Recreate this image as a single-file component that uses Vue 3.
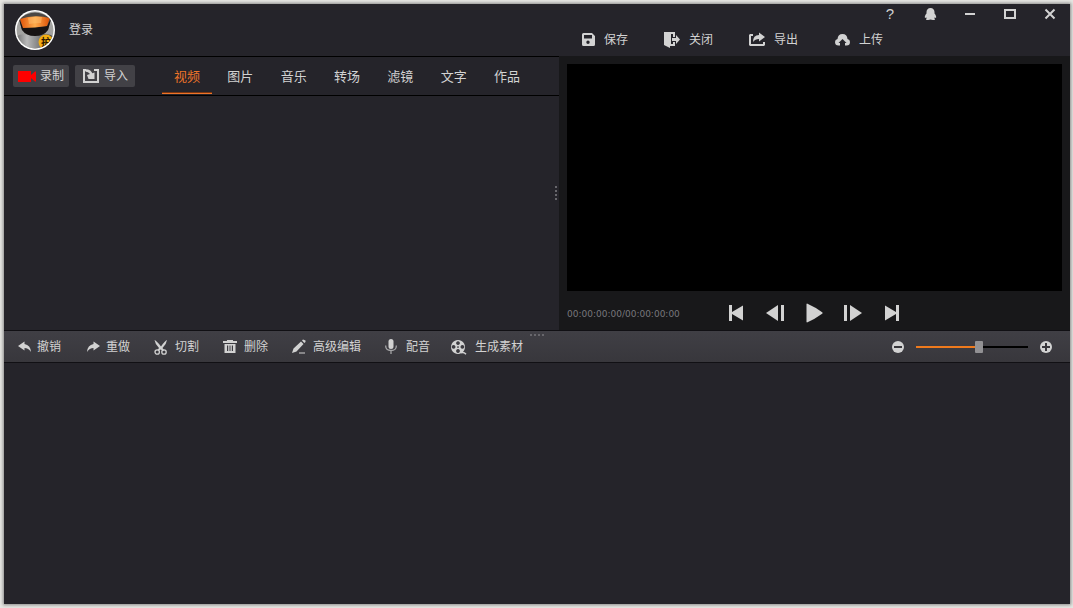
<script setup>
import { ref, computed } from 'vue'

const tabs = ['视频', '图片', '音乐', '转场', '滤镜', '文字', '作品']
const activeTab = ref('视频')
const zoom = ref(57)
const zoomStyle = computed(() => ({ '--fill': zoom.value + '%' }))
</script>

<template>
  <div class="desktop">
    <div class="window">
      <div class="workspace">
        <section class="library">
          <header class="account">
            <button class="avatar" aria-label="账户">
              <svg viewBox="0 0 40 40">
                <defs>
                  <clipPath id="face"><circle cx="20" cy="20" r="18.5" /></clipPath>
                  <linearGradient id="metal" x1="0" x2="1" y1="0" y2="0">
                    <stop offset="0" stop-color="#666" />
                    <stop offset=".3" stop-color="#b9b9b9" />
                    <stop offset=".65" stop-color="#757575" />
                    <stop offset="1" stop-color="#3c3c3c" />
                  </linearGradient>
                  <linearGradient id="visor" x1="0" x2="1" y1="0" y2="0">
                    <stop offset="0" stop-color="#e0540a" />
                    <stop offset=".5" stop-color="#ffac4c" />
                    <stop offset="1" stop-color="#d94d04" />
                  </linearGradient>
                </defs>
                <circle cx="20" cy="20" r="20" fill="#fff" />
                <g clip-path="url(#face)">
                  <rect width="40" height="40" fill="#a3a3a1" />
                  <path d="M4 9Q20 -4 36 9L33 20Q20 27 7 20Z" fill="#4a4744" />
                  <path d="M0 27Q6 23 13 25Q21 27 29 24Q37 24 40 28V40H0Z" fill="url(#metal)" />
                  <path d="M4 9L7 20Q11 26 20 26Q29 26 33 20L36 9L32 16Q20 18 8 17Z" fill="#171313" />
                  <path d="M5 9Q19 4 35 8L32 16Q20 18 8 18Z" fill="url(#visor)" />
                  <path d="M13 8Q20 6 27 7L26 13Q20 13 14 14Z" fill="#ffc06d" opacity=".5" />
                  <circle cx="31" cy="32" r="7.5" fill="#f3ae12" />
                  <text x="31" y="36" text-anchor="middle" class="badge-text">护</text>
                </g>
              </svg>
            </button>
            <a href="#" class="login">登录</a>
          </header>

          <div class="library-bar">
            <div class="sources">
              <button class="source">
                <svg class="icon" viewBox="0 0 18 18">
                  <path d="M0 4H13V8L17 4.5H18V14.5H17L13 11V15H0Z" fill="#fe0000" />
                </svg>
                录制
              </button>
              <button class="source source-wide">
                <svg class="icon" viewBox="0 0 18 18" fill="none" stroke="currentColor">
                  <path d="M4 3H2V15H16V3H12" stroke-width="2" />
                  <path d="M3.500 3.500Q8.500 3.500 9.500 8" stroke-width="2.400" />
                  <path d="M5 8L12.500 5.500V12H6.500Z" fill="currentColor" stroke="none" />
                </svg>
                导入
              </button>
            </div>
            <nav class="tabs">
              <button
                v-for="tab in tabs"
                :key="tab"
                class="tab"
                :class="{ active: tab === activeTab }"
                @click="activeTab = tab"
              >{{ tab }}</button>
            </nav>
          </div>
          <div class="media"></div>
          <div class="grip grip-vertical"><i></i><i></i><i></i><i></i></div>
        </section>

        <section class="output">
          <header class="output-head">
            <div class="window-controls">
              <button class="help" aria-label="帮助">?</button>
              <button aria-label="消息">
                <svg class="icon" viewBox="0 0 18 18" fill="currentColor">
                  <path d="M9.500 3C7 3 5.500 4.700 5.500 7V8.500C4.300 10 3.500 11.500 3.900 12.800C4.200 13.200 4.800 12.700 5.100 12.300L5.700 13.300C5 13.700 4.800 14.200 5.100 14.700C6.600 15.100 8.500 15 9.500 14.500C10.500 15 12.400 15.100 13.900 14.700C14.200 14.200 14 13.700 13.300 13.300L13.900 12.300C14.200 12.700 14.800 13.200 15.100 12.800C15.500 11.500 14.700 10 13.500 8.500V7C13.500 4.700 12 3 9.500 3Z" />
                </svg>
              </button>
              <button aria-label="最小化">
                <svg class="icon" viewBox="0 0 18 18"><path d="M4 8H14V10H4Z" fill="currentColor" /></svg>
              </button>
              <button aria-label="最大化">
                <svg class="icon" viewBox="0 0 18 18" fill="none" stroke="currentColor" stroke-width="2">
                  <rect x="4" y="5" width="10" height="8" />
                </svg>
              </button>
              <button aria-label="关闭窗口">
                <svg class="icon" viewBox="0 0 18 18" stroke="currentColor" stroke-width="2">
                  <path d="M4.500 4.500L13.500 13.500M13.500 4.500L4.500 13.500" />
                </svg>
              </button>
            </div>
            <div class="actions">
              <button>
                <svg class="icon" viewBox="0 0 18 18">
                  <path fill="currentColor" fill-rule="evenodd" d="M4.500 2H13L16 5V13.500Q16 15 14.500 15H4.500Q3 15 3 13.500V3.500Q3 2 4.500 2ZM5 4V7.500H13V4ZM9 9.500A1.700 1.700 0 1 0 9 12.900A1.700 1.700 0 1 0 9 9.500Z" />
                </svg>
                保存
              </button>
              <button>
                <svg class="icon" viewBox="0 0 18 18" fill="currentColor">
                  <path d="M0 1H11V6H9V3H7V13H9V11H11V15H6V17L0 14Z" />
                  <path d="M8 7H12V4L16 8.500L12 13V10H8Z" />
                </svg>
                关闭
              </button>
              <button>
                <svg class="icon" viewBox="0 0 18 18" fill="currentColor">
                  <path d="M1 3H4V5H2V13H14V11H16V14L15 15H1L0 14V4Z" />
                  <path d="M4 11Q4 4 10 4V1.500L16 6L10 10.500V8Q6 8 4 11Z" />
                </svg>
                导出
              </button>
              <button>
                <svg class="icon" viewBox="0 0 18 18">
                  <path fill="currentColor" d="M4.500 14.500Q1 14.500 1 11Q1 8.500 3.500 8Q4 3 8.500 3Q13 3 13.500 8Q16 8.500 16 11Q16 14.500 12.500 14.500H11V12H12.500L8.500 8L4.500 12H6V14.500Z" />
                </svg>
                上传
              </button>
            </div>
          </header>

          <div class="player">
            <div class="screen"></div>
            <div class="transport">
              <span class="timecode">00:00:00:00/00:00:00:00</span>
              <div class="transport-buttons">
                <button aria-label="开头">
                  <svg viewBox="0 0 20 20" fill="currentColor"><path d="M3 2H6V9L17 2.500V17.500L6 11V18H3Z" /></svg>
                </button>
                <button aria-label="上一帧">
                  <svg viewBox="0 0 20 20" fill="currentColor"><path d="M1 10L13 2V18ZM16 2H19V18H16Z" /></svg>
                </button>
                <button aria-label="播放">
                  <svg viewBox="0 0 20 20" fill="currentColor"><path d="M3 .500Q11 4 18.500 9.500V10.500Q11 16 3 19.500L2.500 19V1Z" /></svg>
                </button>
                <button aria-label="下一帧">
                  <svg viewBox="0 0 20 20" fill="currentColor"><path d="M19 10L7 2V18ZM1 2H4V18H1Z" /></svg>
                </button>
                <button aria-label="结尾">
                  <svg viewBox="0 0 20 20" fill="currentColor"><path d="M17 2H14V9L3 2.500V17.500L14 11V18H17Z" /></svg>
                </button>
              </div>
            </div>
          </div>
        </section>
      </div>

      <div class="toolbar">
        <div class="grip grip-horizontal"><i></i><i></i><i></i><i></i></div>
        <div class="tools">
          <button>
            <svg class="icon" viewBox="0 0 18 18" fill="currentColor">
              <path d="M2 8L8.500 3.500V6Q14.500 7 15 14Q12.500 10 8.500 10V12.500Z" />
            </svg>撤销
          </button>
          <button>
            <svg class="icon" viewBox="0 0 18 18" fill="currentColor">
              <path d="M15 8L8.500 3.500V6Q2.500 7 2 14Q4.500 10 8.500 10V12.500Z" />
            </svg>重做
          </button>
          <button>
            <svg class="icon" viewBox="0 0 18 18" fill="currentColor">
              <path d="M.500 2Q2 2 7 8.500Q11.500 2 13 2Q12.500 6 8.500 10L10 12L9 13L6.700 11.500L4.500 13L3.500 12L5 10Q1 6 .500 2Z" />
              <circle cx="3.200" cy="14" r="2.200" fill="none" stroke="currentColor" stroke-width="1.300" />
              <circle cx="10" cy="14" r="2.200" fill="none" stroke="currentColor" stroke-width="1.300" />
            </svg>切割
          </button>
          <button>
            <svg class="icon" viewBox="0 0 18 18" fill="currentColor">
              <path d="M0 3H4V2H10V3H14V5H0Z" />
              <path fill-rule="evenodd" d="M1.500 6H12.500V15H1.500ZM4 7.500V13H5.200V7.500ZM6.500 7.500V13H7.500V7.500ZM8.800 7.500V13H10V7.500Z" />
            </svg>删除
          </button>
          <button>
            <svg class="icon" viewBox="0 0 18 18" fill="currentColor">
              <path d="M0 15L1.500 10.500L9 3.500L11.500 6L4.500 13.500ZM10 2.500L11 1.500L13.500 2.500V4L12.300 5ZM7 14.500H13V15.500H7Z" />
            </svg>高级编辑
          </button>
          <button>
            <svg class="icon" viewBox="0 0 18 18">
              <rect x="3.500" y="1" width="5" height="10" rx="2.500" fill="currentColor" />
              <path d="M.700 7.500V8Q.700 12.500 6 12.500Q11.300 12.500 11.300 8V7.500M6 12.500V16" fill="none" stroke="#a5a5a7" stroke-width="1.300" />
            </svg>配音
          </button>
          <button>
            <svg class="icon" viewBox="0 0 18 18">
              <path fill="currentColor" fill-rule="evenodd" d="M4 2A7 7 0 1 0 4.010 2ZM4 3.200A1.900 1.900 0 1 1 3.990 3.200ZM-.400 7A1.900 1.900 0 1 1 -.410 7ZM8.400 7A1.900 1.900 0 1 1 8.390 7ZM4 11.100A1.900 1.900 0 1 1 3.990 11.100ZM4 8.200A.800 .800 0 1 0 4.010 8.200Z" />
              <path d="M7 14.800Q10 14 12 16.300" fill="none" stroke="currentColor" stroke-width="1.500" />
            </svg>生成素材
          </button>
        </div>
        <div class="zoom">
          <button aria-label="缩小" @click="zoom = Math.max(0, zoom - 5)">
            <svg class="icon" viewBox="0 0 18 18">
              <circle cx="9" cy="9" r="6" fill="currentColor" /><path d="M5 8H13V10H5Z" fill="#37363b" />
            </svg>
          </button>
          <input v-model.number="zoom" type="range" min="0" max="100" aria-label="缩放" :style="zoomStyle" />
          <button aria-label="放大" @click="zoom = Math.min(100, zoom + 5)">
            <svg class="icon" viewBox="0 0 18 18">
              <circle cx="9" cy="9" r="6" fill="currentColor" /><path d="M5 8H8V5H10V8H13V10H10V13H8V10H5Z" fill="#37363b" />
            </svg>
          </button>
        </div>
      </div>
      <div class="timeline"></div>
    </div>
  </div>
</template>

<style>
body {
  margin: 0;
}
</style>

<style scoped>
.desktop {
  box-sizing: border-box;
  min-height: 100vh;
  display: flex;
  padding: 4px 3px 4px 4px;
  background: #e6e6e2;
  font: 12px/16px "Liberation Sans", "Noto Sans CJK SC", sans-serif;
  color: #d2d2d2;
}
.window {
  flex: 1;
  display: flex;
  flex-direction: column;
  min-width: 0;
  background: #25242a;
  box-shadow: 0 0 3px 1px #888;
}
button {
  display: flex;
  align-items: center;
  justify-content: center;
  margin: 0;
  padding: 0;
  border: 0;
  background: none;
  color: inherit;
  font: inherit;
  white-space: nowrap;
  cursor: pointer;
}
.icon {
  flex: none;
  width: 18px;
  height: 18px;
  overflow: visible;
}
.workspace {
  flex: 327 1 0;
  display: grid;
  grid-template-columns: minmax(0, 555fr) minmax(0, 511fr);
}
.library {
  position: relative;
  display: flex;
  flex-direction: column;
}
.account {
  height: 52px;
  display: flex;
  align-items: center;
  gap: 14px;
  padding-left: 11px;
  border-bottom: 1px solid #000;
}
.avatar svg {
  width: 40px;
  height: 40px;
}
.badge-text {
  font-size: 10px;
  font-weight: bold;
  fill: #271600;
}
.login {
  color: inherit;
  text-decoration: none;
}
.library-bar {
  height: 38px;
  display: flex;
  align-items: center;
  gap: 27px;
  padding: 0 27px 0 9px;
  border-bottom: 1px solid #000;
}
.sources {
  display: flex;
  gap: 6px;
}
.source {
  height: 22px;
  gap: 4px;
  padding: 0 5px;
  border-radius: 2px;
  background: #424146;
}
.source-wide {
  padding: 0 7px;
}
.tabs {
  flex: 1;
  align-self: stretch;
  display: flex;
  justify-content: space-between;
}
.tab {
  box-sizing: border-box;
  width: 50px;
  height: 37px;
  padding-top: 4px;
  border-bottom: 1px solid transparent;
  font-size: 13px;
}
.tab.active {
  color: #ee7429;
  border-bottom: 1px solid #ee7429;
  box-shadow: inset 0 -1px #7a3510;
}
.media {
  flex: 1;
}
.grip {
  position: absolute;
  display: flex;
  gap: 2px;
}
.grip i {
  width: 2px;
  height: 2px;
  background: #68676c;
}
.grip-vertical {
  flex-direction: column;
  right: 2px;
  top: 182px;
}
.grip-horizontal {
  top: 3px;
  left: 50%;
  transform: translateX(-50%);
}
.output {
  display: flex;
  flex-direction: column;
}
.output-head {
  height: 52px;
}
.window-controls {
  display: flex;
  justify-content: flex-end;
}
.window-controls button {
  width: 40px;
  height: 20px;
}
.window-controls .help {
  font-size: 15px;
}
.actions {
  display: flex;
  gap: 36px;
  padding-left: 20px;
}
.actions button {
  height: 32px;
  gap: 7px;
}
.player {
  flex: 1;
  display: flex;
  flex-direction: column;
  padding: 8px 8px 0;
  background: #18181a;
}
.screen {
  flex: 1;
  background: #000;
}
.transport {
  height: 40px;
  box-sizing: border-box;
  padding-top: 4px;
  display: grid;
  grid-template-columns: 1fr auto 1fr;
  align-items: center;
}
.timecode {
  padding-top: 2px;
  font: 9px/12px "DejaVu Sans", sans-serif;
  color: #77777a;
}
.transport-buttons {
  display: flex;
}
.transport-buttons button {
  width: 39px;
  padding-right: 1px;
}
.transport-buttons svg {
  width: 20px;
  height: 20px;
}
.toolbar {
  position: relative;
  box-sizing: border-box;
  height: 33px;
  display: flex;
  align-items: center;
  justify-content: space-between;
  padding: 0 15px 0 12px;
  border-top: 1px solid #111014;
  border-bottom: 1px solid #111014;
  margin-top: -1px;
  background: linear-gradient(#403f45, #38373c);
}
.tools {
  display: flex;
  gap: 24px;
}
.tools button {
  gap: 3px;
}
.zoom {
  display: flex;
  align-items: center;
  gap: 9px;
}
.zoom input {
  appearance: none;
  width: 112px;
  height: 12px;
  margin: 0;
  background: linear-gradient(90deg, #ef7a1d var(--fill), #000 var(--fill)) center / 100% 2px no-repeat;
}
.zoom input::-webkit-slider-thumb {
  appearance: none;
  width: 8px;
  height: 12px;
  border-radius: 1px;
  background: #929194;
}
.timeline {
  flex: 241 1 0;
}
</style>
